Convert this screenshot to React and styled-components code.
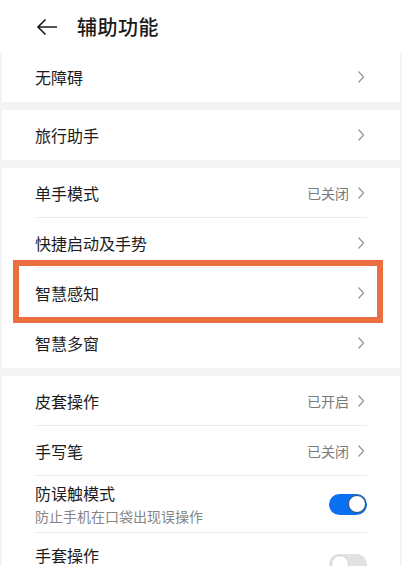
import styled, { createGlobalStyle } from "styled-components"

const GlobalStyle = createGlobalStyle`
  html, body {
    margin: 0;
    padding: 0;
    background: #f4f4f4;
  }
  body {
    font-family: "Noto Sans CJK SC", "Noto Sans", sans-serif;
    color: #1c1c1c;
  }
`

function Chevron() {
  return (
    <svg width="8" height="14" viewBox="0 0 8 14">
      <path d="M1.5 1.5 L6.5 7 L1.5 12.5" fill="none" stroke="#9a9a9a" strokeWidth="1.3" />
    </svg>
  )
}

function Row({ title, value, subtitle, toggle, last, highlight, tall }) {
  return (
    <RowBox $last={last} $tall={tall}>
      <Texts $tall={tall}>
        <Title>{title}</Title>
        {subtitle && <Sub>{subtitle}</Sub>}
      </Texts>
      {toggle === undefined ? (
        <Right>
          {value && <Value>{value}</Value>}
          <Chevron />
        </Right>
      ) : (
        <Switch $on={toggle}>
          <Knob $on={toggle} />
        </Switch>
      )}
      {highlight && <Highlight />}
    </RowBox>
  )
}

function App() {
  return (
    <Page>
      <GlobalStyle />
      <Header>
        <svg width="22" height="18" viewBox="0 0 22 18">
          <path d="M21 9 H2 M9.5 1.5 L2 9 L9.5 16.5" fill="none" stroke="#1c1c1c" strokeWidth="1.6" />
        </svg>
        <HeaderTitle>辅助功能</HeaderTitle>
      </Header>

      <Card>
        <Row title="无障碍" last />
      </Card>

      <Card>
        <Row title="旅行助手" last />
      </Card>

      <Card>
        <Row title="单手模式" value="已关闭" />
        <Row title="快捷启动及手势" />
        <Row title="智慧感知" highlight />
        <Row title="智慧多窗" last />
      </Card>

      <Card>
        <Row title="皮套操作" value="已开启" />
        <Row title="手写笔" value="已关闭" />
        <Row title="防误触模式" subtitle="防止手机在口袋出现误操作" toggle={true} />
        <Row title="手套操作" toggle={false} last tall />
      </Card>
    </Page>
  )
}

const Page = styled.main`
  width: 402px;
  height: 566px;
  overflow: hidden;
  display: flex;
  flex-direction: column;
  gap: 8px;
  background: #f4f4f4;
`

const Header = styled.header`
  display: flex;
  align-items: center;
  flex-shrink: 0;
  gap: 19px;
  height: 52px;
  margin-bottom: -8px;
  padding: 0 36px;
  background: #fff;

  svg {
    margin-top: 1px;
  }
`

const HeaderTitle = styled.h1`
  margin: 0;
  font-size: 20px;
  font-weight: 500;
  letter-spacing: 0.5px;
  color: #1a1a1a;
`

const Card = styled.section`
  margin: 0 2px;
  background: #fff;
  flex-shrink: 0;
`

const RowBox = styled.div`
  position: relative;
  display: flex;
  align-items: center;
  justify-content: space-between;
  min-height: ${(p) => (p.$tall ? "62px" : "50px")};
  padding: 6px 0;
  box-sizing: border-box;
  margin: 0 33px;
  border-bottom: ${(p) => (p.$last ? "none" : "1px solid #ececec")};
`

const Texts = styled.div`
  display: flex;
  flex-direction: column;
  gap: 2px;
  align-self: ${(p) => (p.$tall ? "flex-start" : "center")};
  padding-top: ${(p) => (p.$tall ? "5px" : "0")};
`

const Title = styled.span`
  font-size: 16px;
  line-height: 22px;
  color: #1c1c1c;
`

const Sub = styled.span`
  font-size: 14px;
  line-height: 20px;
  color: #858585;
`

const Right = styled.div`
  display: flex;
  align-items: center;
  gap: 8px;
  padding-right: 2px;
`

const Value = styled.span`
  font-size: 14px;
  color: #7a7a7a;
`

const Switch = styled.div`
  position: relative;
  width: 38px;
  height: 21px;
  border-radius: 11px;
  background: ${(p) => (p.$on ? "#0a6ff0" : "#e2e2e2")};
`

const Knob = styled.div`
  position: absolute;
  top: 1.5px;
  ${(p) => (p.$on ? "right: 1.5px;" : "left: 1.5px;")}
  width: 18px;
  height: 18px;
  box-sizing: border-box;
  border-radius: 50%;
  background: #fff;
  border: 1px solid ${(p) => (p.$on ? "#3a4a5c" : "#d0d0d0")};
`

const Highlight = styled.div`
  position: absolute;
  top: -8px;
  bottom: -6px;
  left: -22px;
  right: -16px;
  border: 6px solid #ea6e40;
  pointer-events: none;
`

export default App
